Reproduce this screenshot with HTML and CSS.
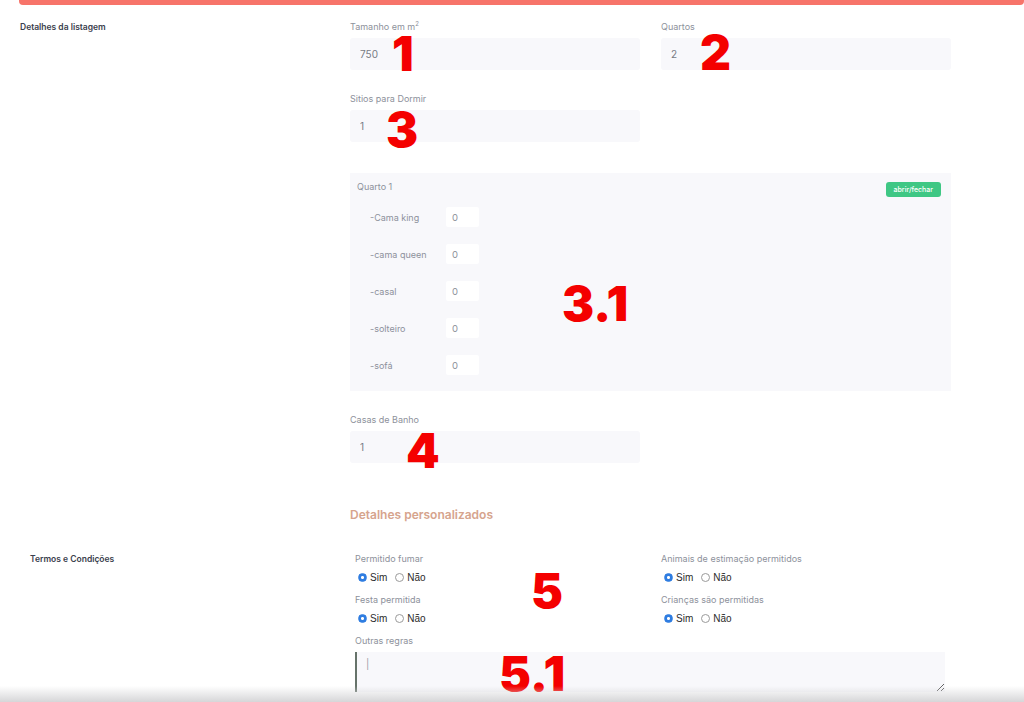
FILE: index.html
```html
<!DOCTYPE html>
<html lang="pt">
<head>
    <meta charset="UTF-8">
    <meta name="viewport" content="width=device-width, initial-scale=1.0">
    <title>Detalhes da listagem</title>
    <link rel="stylesheet" href="styles.css">
</head>
<body>

<div class="page">
    <div class="topbar"></div>

    <section class="listing">
        <h3 class="side-title">Detalhes da listagem</h3>

        <div class="fields">
            <div class="field">
                <label>Tamanho em m<sup>2</sup></label>
                <input type="text" class="box" value="750">
            </div>
            <div class="field">
                <label>Quartos</label>
                <input type="text" class="box" value="2">
            </div>
            <div class="field">
                <label>Sitios para Dormir</label>
                <input type="text" class="box" value="1">
            </div>

            <div class="room">
                <div class="room-head">
                    <span>Quarto 1</span>
                    <button class="toggle">abrir/fechar</button>
                </div>
                <div class="beds">
                    <div class="bed"><span>-Cama king</span><input type="text" value="0"></div>
                    <div class="bed"><span>-cama queen</span><input type="text" value="0"></div>
                    <div class="bed"><span>-casal</span><input type="text" value="0"></div>
                    <div class="bed"><span>-solteiro</span><input type="text" value="0"></div>
                    <div class="bed"><span>-sofá</span><input type="text" value="0"></div>
                </div>
            </div>

            <div class="field">
                <label>Casas de Banho</label>
                <input type="text" class="box" value="1">
            </div>

            <h4 class="custom">Detalhes personalizados</h4>
        </div>
    </section>

    <section class="terms">
        <h3 class="side-title">Termos e Condições</h3>

        <div class="rules">
            <div class="rule">
                <label>Permitido fumar</label>
                <div class="choice">
                    <input type="radio" name="fumar" checked><span>Sim</span>
                    <input type="radio" name="fumar"><span>Não</span>
                </div>
            </div>
            <div class="rule">
                <label>Animais de estimação permitidos</label>
                <div class="choice">
                    <input type="radio" name="animais" checked><span>Sim</span>
                    <input type="radio" name="animais"><span>Não</span>
                </div>
            </div>
            <div class="rule">
                <label>Festa permitida</label>
                <div class="choice">
                    <input type="radio" name="festa" checked><span>Sim</span>
                    <input type="radio" name="festa"><span>Não</span>
                </div>
            </div>
            <div class="rule">
                <label>Crianças são permitidas</label>
                <div class="choice">
                    <input type="radio" name="criancas" checked><span>Sim</span>
                    <input type="radio" name="criancas"><span>Não</span>
                </div>
            </div>
            <div class="rule wide">
                <label>Outras regras</label>
                <textarea class="other">|</textarea>
            </div>
        </div>
    </section>

    <!-- numbered annotations drawn over the form -->
    <span class="mark m1">1</span>
    <span class="mark m2">2</span>
    <span class="mark m3">3</span>
    <span class="mark m31">3.1</span>
    <span class="mark m4">4</span>
    <span class="mark m5">5</span>
    <span class="mark m51">5.1</span>

    <div class="edge"></div>
</div>

</body>
</html>
```

FILE: styles.css
```css
* {
    margin: 0;
    padding: 0;
    box-sizing: border-box;
}

body {
    font-family: Inter, "Noto Sans", sans-serif;
    background-color: white;
    overflow: hidden;
}

.page {
    position: relative;
    width: 1024px;
    height: 702px;
}

.topbar {
    height: 5px;
    margin-left: 19px;
    background-color: #f7746a;
    border-radius: 0 0 4px 4px;
}

.side-title {
    font-size: 8.5px;
    font-weight: 600;
    color: #3a404d;
    line-height: 12px;
}

/* listing */

.listing {
    display: grid;
    grid-template-columns: 350px 600px;
    margin-top: 16px;
}

.listing .side-title {
    padding-left: 20px;
}

.fields {
    display: grid;
    grid-template-columns: 290px 290px;
    column-gap: 21px;
    row-gap: 23px;
}

.field label,
.rule label {
    display: block;
    font-size: 9px;
    line-height: 12px;
    color: #8d919b;
    margin-bottom: 5px;
}

.field sup {
    font-size: 6px;
    line-height: 0;
}

.box {
    display: block;
    width: 100%;
    height: 32px;
    border: none;
    border-radius: 3px;
    background-color: #f8f8fb;
    padding: 0 10px;
    font-family: Inter, sans-serif;
    font-size: 10px;
    color: #777b84;
}

.room {
    grid-column: 1 / 3;
    margin-top: 8px;
    background-color: #f8f8fb;
    padding: 8px 10px 16px 7px;
}

.room-head {
    display: flex;
    justify-content: space-between;
    align-items: flex-start;
    font-size: 9px;
    line-height: 12px;
    color: #8d919b;
}

.toggle {
    margin-top: 1px;
    border: none;
    border-radius: 3px;
    background-color: #3fc784;
    color: white;
    font-family: Inter, sans-serif;
    font-size: 7px;
    font-weight: 500;
    height: 15px;
    padding: 0 8px;
}

.beds {
    display: flex;
    flex-direction: column;
    gap: 17px;
    margin-top: 10px;
    padding-left: 13px;
}

.bed {
    display: flex;
    align-items: center;
    height: 20px;
}

.bed span {
    width: 76px;
    font-size: 9px;
    color: #8d919b;
}

.bed input {
    width: 33px;
    height: 20px;
    border: none;
    border-radius: 2px;
    background-color: white;
    padding-left: 6px;
    font-family: Inter, sans-serif;
    font-size: 9.5px;
    color: #8d919b;
}

.custom {
    grid-column: 1 / 3;
    margin-top: 21px;
    font-size: 12px;
    line-height: 16px;
    font-weight: 600;
    color: #d6a48d;
}

/* terms */

.terms {
    display: grid;
    grid-template-columns: 355px 590px;
    margin-top: 30px;
}

.terms .side-title {
    padding-left: 30px;
}

.rules {
    display: grid;
    grid-template-columns: 306px 284px;
    row-gap: 10px;
}

.rule.wide {
    grid-column: 1 / 3;
}

.choice {
    display: flex;
    align-items: center;
    height: 14px;
    padding-left: 3px;
    font-family: "Liberation Sans", Arial, sans-serif;
    font-size: 10px;
    color: #2b2b2b;
}

.choice span {
    margin: 0 8px 0 3px;
}

.choice input {
    appearance: none;
    width: 9px;
    height: 9px;
    border: 1px solid #9a9a9a;
    border-radius: 50%;
    background-color: white;
}

.choice input:checked {
    border-color: #2f7de1;
    background: radial-gradient(circle, white 0 1.3px, #2f7de1 1.6px);
}

.other {
    display: block;
    width: 590px;
    height: 40px;
    border: none;
    border-left: 2px solid #66736a;
    background-color: #f8f8fb;
    padding: 6px 9px;
    font-family: Inter, sans-serif;
    font-size: 10px;
    color: #9a9ea6;
    resize: both;
}

/* annotations */

.mark {
    position: absolute;
    font-family: Inter, "Liberation Sans", sans-serif;
    font-weight: 900;
    font-size: 48px;
    line-height: 36px;
    color: #f40000;
}

.m1 { left: 392px; top: 36px; }
.m2 { left: 700px; top: 35px; }
.m3 { left: 386px; top: 112px; }
.m31 { left: 562px; top: 286px; }
.m4 { left: 406px; top: 433px; }
.m5 { left: 531px; top: 573px; }
.m51 { left: 499px; top: 656px; }

.edge {
    position: absolute;
    left: 0;
    right: 0;
    bottom: 0;
    height: 16px;
    background: linear-gradient(to bottom, rgba(220, 220, 222, 0), rgba(214, 214, 216, 1));
}
```
